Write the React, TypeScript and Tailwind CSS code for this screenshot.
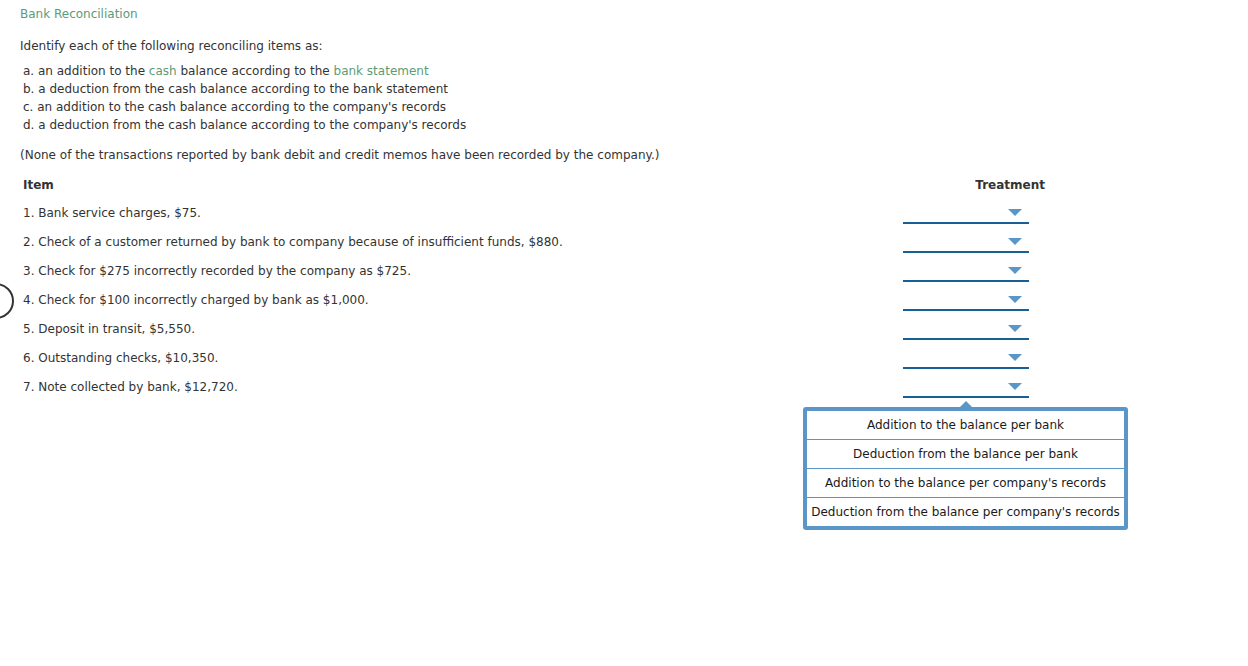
const items = [
  "1. Bank service charges, $75.",
  "2. Check of a customer returned by bank to company because of insufficient funds, $880.",
  "3. Check for $275 incorrectly recorded by the company as $725.",
  "4. Check for $100 incorrectly charged by bank as $1,000.",
  "5. Deposit in transit, $5,550.",
  "6. Outstanding checks, $10,350.",
  "7. Note collected by bank, $12,720.",
];

const options = [
  "Addition to the balance per bank",
  "Deduction from the balance per bank",
  "Addition to the balance per company's records",
  "Deduction from the balance per company's records",
];

const Caret = () => (
  <svg width="14" height="7" viewBox="0 0 14 7" className="block">
    <path d="M0 0 H14 L7 7 Z" fill="#5b96c9" />
  </svg>
);

const Select = () => (
  <div className="w-[126px] h-[29px] flex flex-col justify-end pb-[3px]">
    <div className="flex justify-end pr-[7px] pb-[6px]">
      <Caret />
    </div>
    <div className="h-[2px] bg-[#1a5f94]" />
  </div>
);

export default function App() {
  return (
    <div
      className="w-[1248px] h-[666px] bg-white text-[#333] text-[12px] relative overflow-hidden"
      style={{ fontFamily: "'DejaVu Sans', Verdana, sans-serif" }}
    >
      <div className="absolute left-[-22px] top-[283px] w-[36px] h-[36px] rounded-full border-[2.5px] border-[#333]" />

      <div className="pl-[20px] pt-[6px]">
        <div className="text-[#5d9b77] leading-[16px]">Bank Reconciliation</div>

        <p className="mt-[16px] leading-[16px]">Identify each of the following reconciling items as:</p>
        <div className="mt-[8px] pl-[3px] leading-[18px]">
          <div>
            a. an addition to the <span className="text-[#5d9b77]">cash</span> balance according to the{" "}
            <span className="text-[#5d9b77]">bank statement</span>
          </div>
          <div>b. a deduction from the cash balance according to the bank statement</div>
          <div>c. an addition to the cash balance according to the company's records</div>
          <div>d. a deduction from the cash balance according to the company's records</div>
        </div>
        <p className="mt-[13px] leading-[16px]">
          (None of the transactions reported by bank debit and credit memos have been recorded by the company.)
        </p>

        <div className="flex mt-[6px] pl-[3px]">
          <div className="w-[780px]">
            <div className="font-bold h-[29px] flex items-center pt-[2px]">Item</div>
            {items.map((t) => (
              <div key={t} className="h-[29px] flex items-center">
                {t}
              </div>
            ))}
          </div>
          <div className="w-[325px] flex flex-col items-center">
            <div className="font-bold h-[29px] w-full flex items-center justify-end pt-[2px] pr-[83px]">
              Treatment
            </div>
            {items.map((t) => (
              <Select key={t} />
            ))}
            <div className="relative mt-[6px] w-[325px] border-4 border-[#5b96c9] rounded-[3px] bg-white">
              <svg width="12" height="6" viewBox="0 0 12 6" className="absolute left-[153px] top-[-10px]">
                <path d="M0 6 H12 L6 0 Z" fill="#5b96c9" />
              </svg>
              {options.map((o, i) => (
                <div
                  key={o}
                  className={`flex items-center justify-center text-[#1a1a1a] ${i > 0 ? "h-[29px] border-t border-[#5b96c9]" : "h-[28px]"}`}
                >
                  {o}
                </div>
              ))}
            </div>
          </div>
        </div>
      </div>
    </div>
  );
}
